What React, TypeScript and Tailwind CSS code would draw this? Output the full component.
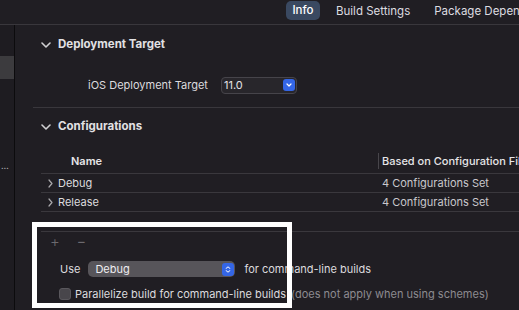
import React from 'react';

const ChevronDown = () => (
  <svg width="10" height="6" viewBox="0 0 10 6" className="shrink-0">
    <path d="M1 1l4 4 4-4" fill="none" stroke="#d0d0d2" strokeWidth="1.6" strokeLinecap="round" strokeLinejoin="round" />
  </svg>
);

const ChevronRight = () => (
  <svg width="5" height="9" viewBox="0 0 5 9" className="shrink-0">
    <path d="M1 1l3 3.5L1 8" fill="none" stroke="#a9a8ab" strokeWidth="1.2" strokeLinecap="round" strokeLinejoin="round" />
  </svg>
);

const SectionHeader = ({ title, h }: { title: string; h: string }) => (
  <div className={`flex items-center pt-[2px] ${h}`}>
    <div className="ml-[26px] w-[17px] shrink-0">
      <ChevronDown />
    </div>
    <span className="text-[11.5px] font-bold text-[#e2e1e4]">{title}</span>
  </div>
);

const ConfigRow = ({ name }: { name: string }) => (
  <div className="ml-[26px] flex h-[19px] items-center border-b border-[#3a383d]">
    <div className="ml-[7px] w-[10px] shrink-0">
      <ChevronRight />
    </div>
    <span className="w-[324px] shrink-0 text-[11px] text-[#dcdbde]">{name}</span>
    <span className="text-[11px] text-[#c9c8cc]">4 Configurations Set</span>
  </div>
);

export default function App() {
  return (
    <div
      className="relative flex h-[310px] w-[519px] flex-col overflow-hidden bg-[#201e23]"
      style={{ fontFamily: 'Inter, "Noto Sans", sans-serif' }}
    >
      {/* Tab bar */}
      <div className="flex h-[25px] shrink-0 items-start overflow-hidden border-b border-[#39373c] pt-[1px] whitespace-nowrap">
        <div className="ml-[286px] flex h-[19px] w-[34px] shrink-0 items-center justify-center rounded-[5px] bg-[#3a4961] text-[11.5px] font-medium text-white">
          Info
        </div>
        <span className="ml-[16px] mt-[2px] shrink-0 text-[11.5px] text-[#dddce0]">Build Settings</span>
        <span className="ml-[24px] mt-[2px] shrink-0 text-[11.5px] text-[#dddce0]">Package Depend</span>
      </div>

      <div className="flex flex-1">
        {/* Sidebar stub */}
        <div className="flex w-[15px] shrink-0 flex-col border-r border-[#0c0b0d] bg-[#1e1c21]">
          <div className="mt-[31px] h-[23px] bg-[#3c3b3e]" />
          <div className="mt-[82px] pl-[1px] text-[9px] leading-[10px] text-[#a8a7ab]">…</div>
        </div>

        {/* Main editor */}
        <div className="flex min-w-0 flex-1 flex-col overflow-hidden whitespace-nowrap">
          <SectionHeader title="Deployment Target" h="h-[38px]" />
          <div className="flex h-[44px] items-center">
            <span className="ml-[73px] w-[133px] shrink-0 text-[11px] text-[#dcdbde]">iOS Deployment Target</span>
            <div className="flex h-[17px] w-[76px] shrink-0 items-center justify-between rounded-[4px] border border-[#46444a] bg-[#28262b] pl-[2px] pr-[1px]">
              <span className="text-[11px] text-[#e4e3e6]">11.0</span>
              <div className="flex h-[12px] w-[12px] items-center justify-center rounded-[3px] bg-[#3466e6]">
                <svg width="6" height="4" viewBox="0 0 6 4">
                  <path d="M1 1l2 2 2-2" fill="none" stroke="#fff" strokeWidth="1.2" strokeLinecap="round" strokeLinejoin="round" />
                </svg>
              </div>
            </div>
          </div>

          <div className="ml-[18px] border-t border-[#39373c]">
            <div className="-ml-[18px]">
              <SectionHeader title="Configurations" h="h-[36px]" />
            </div>
          </div>

          {/* Table */}
          <div className="ml-[26px] flex h-[30px] items-start border-b border-[#3a383d] pt-[9px]">
            <span className="ml-[30px] w-[307px] shrink-0 text-[11px] font-semibold text-[#e6e5e8]">Name</span>
            <div className="flex shrink-0 items-center">
              <div className="h-[16px] w-px bg-[#48464b]" />
              <span className="ml-[3px] text-[11px] font-medium text-[#e6e5e8]">Based on Configuration File</span>
            </div>
          </div>
          <ConfigRow name="Debug" />
          <ConfigRow name="Release" />

          <div className="h-[19px]" />
          <div className="ml-[26px] border-t border-[#3a383d]">
            <div className="flex h-[18px] items-center">
              <span className="ml-[9px] text-[15px] font-light leading-none text-[#6c6a6f]">+</span>
              <span className="ml-[17px] text-[14px] leading-none text-[#6c6a6f]">−</span>
            </div>
          </div>

          <div className="mt-[11px] flex h-[16px] items-center">
            <span className="ml-[45px] shrink-0 text-[11px] text-[#dcdbde]">Use</span>
            <div className="ml-[8px] flex h-[16px] w-[147px] shrink-0 items-center justify-between rounded-[5px] bg-[#57555a] pl-[7px] pr-[1px]">
              <span className="text-[11px] text-[#eeedf0]">Debug</span>
              <div className="flex h-[13px] w-[12px] flex-col items-center justify-center gap-[1px] rounded-[3px] bg-[#3466e6]">
                <svg width="6" height="3" viewBox="0 0 6 3">
                  <path d="M1 2.5L3 .8l2 1.7" fill="none" stroke="#fff" strokeWidth="1" strokeLinecap="round" />
                </svg>
                <svg width="6" height="3" viewBox="0 0 6 3">
                  <path d="M1 .5l2 1.7 2-1.7" fill="none" stroke="#fff" strokeWidth="1" strokeLinecap="round" />
                </svg>
              </div>
            </div>
            <span className="ml-[9px] shrink-0 text-[11px] text-[#dcdbde]">for command-line builds</span>
          </div>

          <div className="mt-[10px] flex h-[14px] items-center">
            <div className="ml-[44px] h-[12px] w-[12px] shrink-0 rounded-[3px] border border-[#5a585d] bg-[#48464b]" />
            <span className="ml-[4px] shrink-0 text-[11px] text-[#dcdbde]">Parallelize build for command-line builds</span>
            <span className="ml-[5px] shrink-0 text-[11px] text-[#8d8b90]">(does not apply when using schemes)</span>
          </div>
        </div>
      </div>

      {/* Highlight annotation */}
      <div className="pointer-events-none absolute left-[32px] top-[222px] h-[86px] w-[260px] border-[5px] border-white" />
    </div>
  );
}
